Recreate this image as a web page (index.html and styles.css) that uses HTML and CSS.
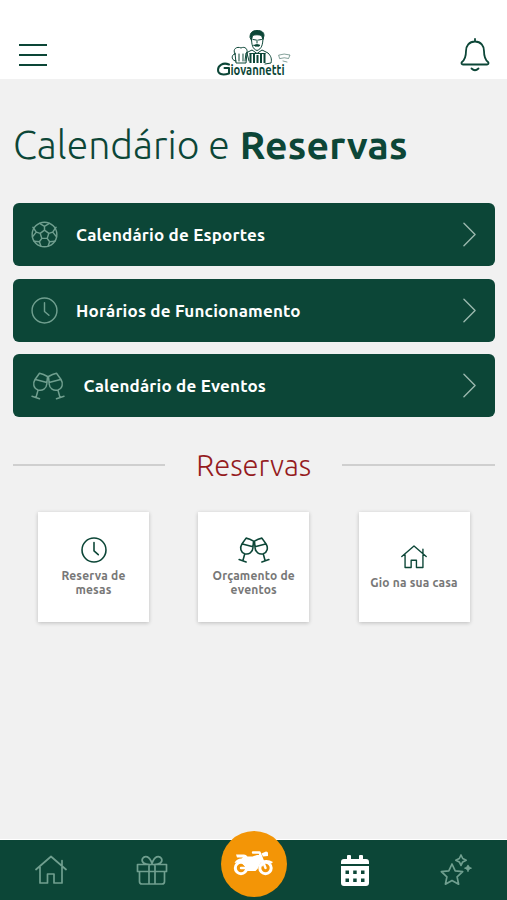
FILE: index.html
```html
<!DOCTYPE html>
<html lang="pt-BR">
<head>
<meta charset="utf-8">
<meta name="viewport" content="width=device-width, initial-scale=1">
<title>Calendário e Reservas</title>
<link rel="stylesheet" href="styles.css">
</head>
<body>
<svg class="defs" width="0" height="0" aria-hidden="true">
  <symbol id="clock" viewBox="0 0 28 28"><circle cx="14" cy="14" r="12.900"/><path d="M14 6v9l4.600 4"/></symbol>
  <symbol id="house" viewBox="0 0 32 30"><path d="M1 14.500 16 1.500l15 13M5 12V28h7.500v-9h6.500v9H27V12M27 10.500V5.500"/></symbol>
  <symbol id="glasses" viewBox="0 0 34 28">
    <path d="M8.500 1.200 4 7.500C1.500 11.500 2.500 16.500 7 18c4.500 1.300 8.500-1.500 8.800-6L16.500 4.500q-4-2.500-8-3.300zM4.500 7.500l11.500 3M7 18.300 5 25.500M1 24.300l7.500 2.500"/>
    <path d="M25.500 1.200 30 7.500c2.500 4 1.500 9-3 10.500-4.500 1.300-8.500-1.500-8.800-6L17.500 4.500q4-2.500 8-3.300zM29.500 7.500 18 10.500M27 18.300l2 7.200M33 24.300l-7.500 2.500"/>
  </symbol>
</svg>
<header class="header">
  <svg class="menu" viewBox="0 0 28 24"><path d="M0 2h28M0 12h28M0 22h28"/></svg>
  <svg class="logo" viewBox="0 0 76 50" role="img" aria-label="Giovannetti">
    <path class="solid" d="M33 9c0-4 2-6.500 7-6.500s7 2 7 5l-1 4-1.500-4c-3-1-6-1-9 0L34.500 12z"/>
    <path d="M34.500 9c0 8 1 12 5.500 13.500C44.500 21 46 17 46 9M36 11.500l3 .5M41.500 12l3-.5M40 12v3M28 33l1-8 6-3 5 3.500 5-3.500 6 3c3 3 4 6 3 10l-6 1M30 25l2 8"/>
    <path class="solid" d="M37 17.300q3-1.500 6 0-1 1.400-3 .7-2 .7-3-.7z"/>
    <path class="stripe" d="M33.500 25v10M37 26v9M40.500 27v8M44 26v9M47.500 25v10"/>
    <path d="M33 25.500h15M18 25l1 10h10l1-10M18 26c-3-5 2-8 6-6 4-2 7 1 6 5M18 26c-4 0-4 7 1 7M22 26v7M26 26v7"/>
    <path class="faint" d="M62 27q5-2 11 0l-1.500 3.500q-4-1.500-8.500 0zM66 33l4 1"/>
    <path class="thin" d="M12 36.500C6 34 1 37.500 1 42c0 4 4 5.500 11 3.500V40H7.500"/>
    <text x="13.500" y="46.500" textLength="54" lengthAdjust="spacingAndGlyphs">iovannetti</text>
  </svg>
  <svg class="bell" viewBox="0 0 30 34"><path d="M15 1v2M15 3.500C9 3.500 6 8 6 13c0 7-1.500 9-4 11-1 1-.5 2.500 1 2.500h24c1.500 0 2-1.500 1-2.500-2.500-2-4-4-4-11 0-5-3-9.500-9-9.500zM11.500 30.500q3.500 3.500 7 0"/></svg>
</header>
<main class="main">
  <h1 class="title"><span>Calendário e</span> <strong>Reservas</strong></h1>
  <nav class="links">
    <a class="link"><svg class="link-icon" viewBox="0 0 28 28"><circle cx="14" cy="14" r="12.800"/><path d="m14 9.500 4.500 3.300-1.700 5.200h-5.600l-1.700-5.200zM14 9.500V5.500L9 2.500M14 5.500l5-3M18.500 12.800l4-1.300 3.500-5M22.500 11.500l4 5M16.800 18l2.500 3.500 5.500-.5M19.300 21.500l-1.500 4.500M11.200 18l-2.500 3.500 1.500 4.500M8.700 21.500 3.200 21M9.500 12.800l-4-1.300-4 5M5.500 11.500 2 6.500"/></svg><span>Calendário de Esportes</span><svg class="chevron" viewBox="0 0 14 26"><path d="m1 1 12 12L1 25"/></svg></a>
    <a class="link"><svg class="link-icon"><use href="#clock"/></svg><span>Horários de Funcionamento</span><svg class="chevron" viewBox="0 0 14 26"><path d="m1 1 12 12L1 25"/></svg></a>
    <a class="link"><svg class="link-icon wide"><use href="#glasses"/></svg><span>Calendário de Eventos</span><svg class="chevron" viewBox="0 0 14 26"><path d="m1 1 12 12L1 25"/></svg></a>
  </nav>
  <h2 class="divider"><span>Reservas</span></h2>
  <section class="cards">
    <a class="card"><svg class="card-icon"><use href="#clock"/></svg><span>Reserva de<br>mesas</span></a>
    <a class="card"><svg class="card-icon wide"><use href="#glasses"/></svg><span>Orçamento de<br>eventos</span></a>
    <a class="card"><svg class="card-icon"><use href="#house"/></svg><span>Gio na sua casa</span></a>
  </section>
</main>
<nav class="tabs">
  <a><svg class="tab-icon"><use href="#house"/></svg></a>
  <a><svg class="tab-icon" viewBox="0 0 32 30"><path d="M1.500 9.500h29v7h-29zM3.500 16.500v10q0 2.500 2.500 2.500h20q2.500 0 2.500-2.500v-10M13 9.500V29M19 9.500V29M15.500 9.500C8 10 5 7 6.500 3.500 9 0 13.500 1 16 8.500 18.500 1 23 0 25.500 3.500 27 7 24 10 16.500 9.500"/></svg></a>
  <a class="delivery"><svg class="moto" viewBox="0 0 41 26"><circle class="wheel" cx="8" cy="17" r="5.700"/><circle class="wheel" cx="32.500" cy="17" r="5.700"/><path d="M3 3.500h8q2 0 3.500 2h5L24 4h4l2.500 6-3 2-3 6-2 2h-9l-1-4-5-5-6 1q2-4.500 7-4.500L10 6.500H4zM28.500 2.500 33 .5q2 0 2 1.500v3l-5 .5zM28.500 10q6-2.500 11.500 1l-1.500 1.500q-4-2-7 0l-3 4z"/><path class="spoke" d="M20 1.500h6.500L32.500 17M8 17h7"/></svg></a>
  <a><svg class="calendar" viewBox="0 0 28 31"><path d="M0 9V7q0-3 3-3h3V1q0-1 1-1h2q1 0 1 1v3h8V1q0-1 1-1h2q1 0 1 1v3h3q3 0 3 3v2zM0 11h28v17q0 3-3 3H3q-3 0-3-3z"/><path class="holes" d="M4.500 15.500h3.500V19H4.500zM12.200 15.500h3.500V19h-3.500zM20 15.500h3.500V19H20zM4.500 23.500h3.500V27H4.500zM12.200 23.500h3.500V27h-3.500zM20 23.500h3.500V27H20z"/></svg></a>
  <a><svg class="stars" viewBox="0 0 32 32"><path d="m12 10 3.200 6.800 7.500.9-5.600 5.100 1.500 7.400L12 26.500l-6.600 3.700 1.500-7.400-5.600-5.100 7.500-.9zM21 1l1.700 3.500 3.500 1.700-3.500 1.700L21 11.400l-1.700-3.500-3.500-1.700 3.500-1.700zM28 11.500v5.500M25.200 14.200h5.600M27 13.200l2 2M29 13.200l-2 2"/></svg></a>
</nav>
</body>
</html>
```
FILE: styles.css
```css
* { box-sizing: border-box; }
body {
  margin: 0;
  height: 900px;
  display: flex;
  flex-direction: column;
  overflow: hidden;
  background: #f1f1f1;
  color: #0c4637;
  font-family: Ubuntu, "Noto Sans", "Open Sans", sans-serif;
}
svg { display: block; flex: none; overflow: visible; fill: none; stroke: currentColor; stroke-width: 1.7; stroke-linecap: round; stroke-linejoin: round; }
.defs { position: absolute; }
.header {
  height: 79px;
  background: #fff;
  display: grid;
  grid-template-columns: 1fr 76px 1fr;
  padding: 0 17px 0 19px;
}
.menu { width: 28px; height: 24px; margin-top: 43px; stroke-width: 2; stroke-linecap: butt; }
.logo { width: 76px; height: 50px; margin-top: 28px; stroke-width: 1; }
.logo .solid { fill: currentColor; }
.logo .stripe { stroke-width: 2; stroke-linecap: butt; }
.logo .faint { opacity: .5; }
.logo .thin { stroke-width: 2; }
.logo text { fill: currentColor; stroke: none; font: 700 15px/15px Ubuntu, "Open Sans", sans-serif; }
.bell { width: 30px; height: 34px; margin-top: 38px; justify-self: end; stroke-width: 1.8; }
.main { flex: 1; padding: 0 12.5px 0 13px; }
.title { margin: 41px 0 0; height: 83px; line-height: 48px; font-size: 39.2px; white-space: nowrap; display: flex; gap: 10px; font-weight: 300; }
.title strong { font-weight: 700; letter-spacing: .2px; }
.links { display: flex; flex-direction: column; gap: 12.3px; }
.link {
  height: 63.300px;
  display: flex;
  align-items: center;
  padding: 0 19px 0 18px;
  border-radius: 6px;
  background: #0c4637;
  color: #fff;
  font-size: 17px;
  font-weight: 700;
  letter-spacing: .19px;
}
.link-icon { width: 27px; height: 27px; margin-right: 18px; color: #709f8f; stroke-width: 1.5; }
.link-icon.wide { width: 34px; height: 28px; margin-right: 18.500px; }
.chevron { width: 13px; height: 25px; margin-left: auto; color: #9bb8ae; stroke-width: 1.5; }
.divider { margin: 30px 0 0; height: 38px; display: flex; align-items: center; gap: 31px; color: #951b1e; font-size: 29.2px; line-height: 38px; font-weight: 300; }
.divider::before, .divider::after { content: ""; flex: 1; height: 2px; margin-bottom: 3px; background: #cfcfcf; }
.cards { display: flex; justify-content: space-between; padding: 0 25px; margin-top: 26.300px; }
.card {
  width: 111px;
  height: 110px;
  display: flex;
  flex-direction: column;
  align-items: center;
  justify-content: center;
  gap: 6px;
  background: #fff;
  box-shadow: 0 1px 4px rgba(0,0,0,.22);
  text-align: center;
  font-size: 12px;
  line-height: 14px;
  font-weight: 700;
  letter-spacing: .2px;
}
.card span { color: #777; }
.card-icon { width: 26px; height: 26px; }
.card-icon.wide { width: 32px; }
.tabs {
  height: 60px;
  display: grid;
  grid-template-columns: repeat(5, 1fr);
  background: #0c4637;
  color: #709f8f;
  box-shadow: 0 -1px #fff;
}
.tabs a { display: flex; align-items: center; justify-content: center; }
.tab-icon { width: 32px; height: 30px; }
.tabs .delivery { width: 66px; height: 66px; margin: -9px 0 0 1px; justify-self: center; border-radius: 50%; background: #f39506; color: #fff; }
.moto { width: 41px; height: 26px; }
.moto path { fill: currentColor; stroke: none; }
.moto .wheel { stroke-width: 3; }
.moto .spoke { fill: none; stroke: currentColor; stroke-width: 2.4; }
.calendar { width: 28px; height: 31px; color: #fff; fill: currentColor; stroke: none; }
.calendar .holes { fill: #0c4637; }
.stars { width: 32px; height: 32px; }
```
